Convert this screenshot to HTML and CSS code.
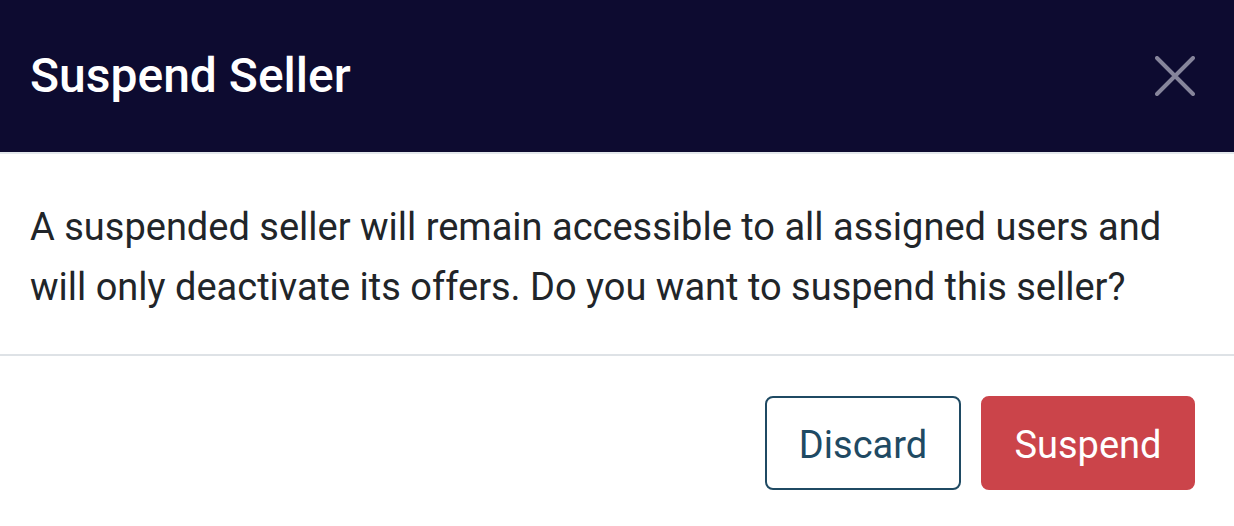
FILE: index.html
```html
<!DOCTYPE html>
<html lang="en">
<head>
<meta charset="utf-8">
<title>Suspend Seller</title>
<link rel="stylesheet" href="styles.css">
</head>
<body>
<div class="modal">
  <header class="modal-header">
    <h1 class="modal-title">Suspend Seller</h1>
    <button class="close" aria-label="Close">
      <svg width="40" height="40" viewBox="0 0 40 40"><path d="M2 2 L38 38 M38 2 L2 38" stroke="currentColor" stroke-width="4" stroke-linecap="round" fill="none"/></svg>
    </button>
  </header>
  <div class="modal-body">
    <p>A suspended seller will remain accessible to all assigned users and will only deactivate its offers. Do you want to suspend this seller?</p>
  </div>
  <footer class="modal-footer">
    <button class="btn btn-outline">Discard</button>
    <button class="btn btn-danger">Suspend</button>
  </footer>
</div>
</body>
</html>
```
FILE: styles.css
```css
html, body {
  margin: 0;
  padding: 0;
  background: #ffffff;
}
body {
  font-family: Roboto, "Liberation Sans", sans-serif;
  color: #212529;
  width: 1234px;
  height: 526px;
  overflow: hidden;
}
.modal {
  display: flex;
  flex-direction: column;
}
.modal-header {
  height: 152px;
  background: #0d0b30;
  border-bottom: 2px solid #e3e8ec;
  display: flex;
  align-items: center;
  justify-content: space-between;
  padding: 0 39px 0 30px;
}
.modal-title {
  margin: 0;
  color: #ffffff;
  font-size: 48px;
  font-weight: 500;
  line-height: 1;
}
.close {
  background: none;
  border: 0;
  padding: 0;
  width: 40px;
  height: 40px;
  color: #86859b;
  display: flex;
  cursor: pointer;
}
.modal-body {
  height: 200px;
  box-sizing: border-box;
  padding: 5px 30px 0;
  display: flex;
  align-items: center;
}
.modal-body p {
  margin: 0;
  font-size: 38px;
  line-height: 60px;
}
.modal-footer {
  border-top: 2px solid #dee2e6;
  display: flex;
  justify-content: flex-end;
  gap: 20px;
  padding: 40px 39px 0 0;
}
.btn {
  font-family: inherit;
  font-size: 38px;
  height: 94px;
  padding: 4px 0 0;
  border-radius: 8px;
  box-sizing: border-box;
  cursor: pointer;
}
.btn-outline {
  width: 196px;
  background: #ffffff;
  border: 2px solid #1f4a63;
  color: #1f4a63;
}
.btn-danger {
  width: 214px;
  background: #cb444a;
  border: 2px solid #cb444a;
  color: #ffffff;
}
```
